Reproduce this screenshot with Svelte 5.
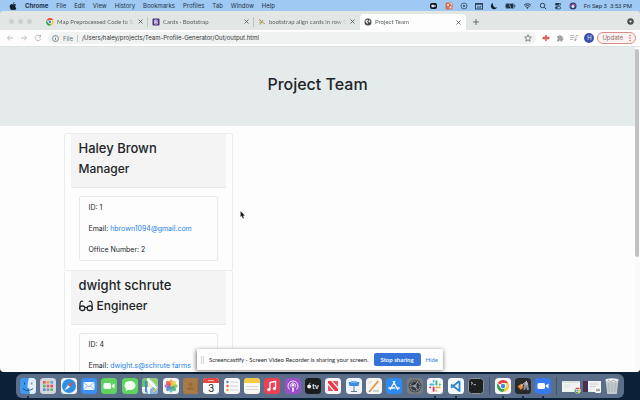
<script>
  const menus = ['File', 'Edit', 'View', 'History', 'Bookmarks', 'Profiles', 'Tab', 'Window', 'Help'];

  const chrome =
    '<circle cx="8" cy="8" r="6" fill="#fff"/><path d="M8 2a6 6 0 0 1 5.2 3H8a3 3 0 0 0-2.7 1.6L2.8 5A6 6 0 0 1 8 2z" fill="#e0443a"/><path d="M13.3 5.1A6 6 0 0 1 8 14l2.7-4.7A3 3 0 0 0 10 5.1z" fill="#f9c932"/><path d="M2.7 5.1A6 6 0 0 0 8 14l2.4-4.2A3 3 0 0 1 5.2 9.300z" fill="#35a155"/><circle cx="8" cy="8" r="2.800" fill="#fff"/><circle cx="8" cy="8" r="2.200" fill="#4285dc"/>';

  const tabs = [
    { title: 'Map Preprocessed Code to Sc', icon: `<g transform="translate(-2.500 -2.500) scale(1.300)">${chrome}</g>` },
    {
      title: 'Cards · Bootstrap',
      icon: '<rect x="1" y="1" width="14" height="14" rx="2" fill="#4b2f83"/><path d="M5.500 4h3.300a2 2 0 0 1 0 4H5.500zM5.500 8h3.700a2 2 0 0 1 0 4H5.500z" fill="none" stroke="#fff" stroke-width="1.600"/>'
    },
    {
      title: 'bootstrap align cards in row C',
      icon: '<path d="M2 3l5 4" stroke="#e05a4a" stroke-width="2"/><path d="M4 13l6-9" stroke="#5fae55" stroke-width="2"/><path d="M8 8l6 4" stroke="#c98b8b" stroke-width="2"/><path d="M2 9h4" stroke="#dfae48" stroke-width="2"/>'
    },
    {
      title: 'Project Team',
      active: true,
      icon: '<circle cx="8" cy="8" r="7" fill="#45494c"/><path d="M3 5l4-2 1 2-2 2 2 2-1 3-2-2-2-3zM10 3l3 3-1 3-3-1z" fill="#e9eded"/>'
    }
  ];

  const status = [
    { name: 'Zoom', w: 9, art: '<rect x="1" y="2" width="14" height="12" rx="4" fill="#10161e"/><rect x="4" y="5.500" width="6" height="5" rx="1" fill="#d8e8f8"/><path d="M10.500 7.500l2-1.500v4l-2-1.500z" fill="#d8e8f8"/>' },
    { name: 'Capture', w: 8, art: '<rect x="1" y="1" width="14" height="14" rx="2" fill="#d96a4d"/><path d="M4 4h4v4H4zM9 9h4v4H9z" fill="#f7e7df"/><path d="M9 3h4v4" stroke="#f7e7df" fill="none" stroke-width="1.500"/>' },
    { name: 'Play', w: 8, art: '<circle cx="8" cy="8" r="6" fill="none" stroke="#2c4560" stroke-width="1.500"/><path d="M6.500 5l4.500 3-4.500 3z" fill="#2c4560"/>' },
    { name: 'Keyboard', w: 8, art: '<rect x="1" y="3" width="14" height="11" fill="none" stroke="#2c4560" stroke-width="2"/><path d="M1 5h14M4 8.500h3M9 8.500h4M4 11.500h8" stroke="#2c4560" stroke-width="1.500"/>' },
    { name: 'Do not disturb', w: 8, art: '<path d="M6 2a6.500 6.500 0 1 0 8 9A7 7 0 0 1 6 2z" fill="#10202f"/>' },
    { name: 'Battery', w: 11, art: '<rect x="-1" y="4" width="15" height="8" rx="2" fill="#1b2d40"/><rect x="-2" y="3" width="18" height="10" rx="3" fill="none" stroke="#2c4560"/><path d="M17 6v4" stroke="#2c4560" stroke-width="1.500"/><path d="M8 2L4.500 8.500h4L7 14" stroke="#9fc9f2" fill="none"/>' },
    { name: 'Wi-Fi', w: 9, art: '<path d="M1 6.500a10 10 0 0 1 14 0M3.500 9a6.500 6.500 0 0 1 9 0" fill="none" stroke="#22384f" stroke-width="2"/><path d="M5.500 11l2.500 3 2.500-3a4 4 0 0 0-5 0z" fill="#22384f"/>' },
    { name: 'Search', w: 8, art: '<circle cx="7" cy="7" r="4.500" fill="none" stroke="#22384f" stroke-width="1.800"/><path d="M10.500 10.500l4 4" stroke="#22384f" stroke-width="2"/>' },
    { name: 'Control Centre', w: 8, art: '<rect x="2" y="2" width="12" height="5" rx="2.500" fill="#22384f"/><circle cx="11.500" cy="4.500" r="1.500" fill="#9fc9f2"/><rect x="2.700" y="9.200" width="10.600" height="4.600" rx="2.200" fill="none" stroke="#22384f" stroke-width="1.500"/><circle cx="5" cy="11.500" r="2" fill="#22384f"/>' },
    { name: 'Siri', w: 8, art: '<circle cx="8" cy="8" r="7" fill="#34386e"/><path d="M3 9c2-6 8-6 10-1" fill="none" stroke="#d86aa5" stroke-width="2"/><circle cx="8" cy="9" r="3" fill="#d9eef8"/>' }
  ];

  const tile = (fill, inner) => `<rect width="16" height="16" rx="3.500" fill="${fill}"/>${inner}`;

  const apps = [
    { name: 'Finder', open: true, art: tile('#3d98ee', '<path d="M9 0h3.500A3.500 3.500 0 0 1 16 3.500v9a3.500 3.500 0 0 1-3.500 3.500H10c-.6-2-.8-4-.8-6H7.500C7.600 6 8 3 9 0z" fill="#e3edf6"/><path d="M4.500 4.500v2M11.800 4.500v2M3 10.500c3 2.500 7 2.500 10 0" fill="none" stroke="#173a66" stroke-width=".8"/>') },
    { name: 'Launchpad', art: tile('#d3d8df', '<path d="M3 3h2.600v2.600H3z" fill="#e5584d"/><path d="M6.700 3h2.600v2.600H6.700z" fill="#f09a42"/><path d="M10.400 3H13v2.600h-2.600z" fill="#54a8e6"/><path d="M3 6.700h2.600v2.600H3z" fill="#54b864"/><path d="M6.700 6.700h2.600v2.600H6.700z" fill="#dd567c"/><path d="M10.400 6.700H13v2.600h-2.600z" fill="#e64d43"/><path d="M3 10.400h2.600V13H3z" fill="#5a8ce0"/><path d="M6.700 10.400h2.600V13H6.700z" fill="#8a929c"/><path d="M10.400 10.400H13V13h-2.600z" fill="#59bd6a"/>') },
    { name: 'Safari', art: tile('#eef2f6', '<circle cx="8" cy="8" r="7" fill="#2f8fe3"/><path d="M12.500 3.500L9 9 7 7z" fill="#e9493f"/><path d="M3.500 12.500L7 7l2 2z" fill="#fff"/>') },
    { name: 'Mail', art: tile('#3a8ff0', '<rect x="2.500" y="4" width="11" height="8" rx="1" fill="#f4f8fd"/><path d="M2.800 4.500L8 9l5.200-4.500M3 11.500l3.500-3.700M13 11.500L9.500 7.800" fill="none" stroke="#76a9e4" stroke-width=".8"/>') },
    { name: 'FaceTime', art: tile('#5fd360', '<rect x="2.500" y="5" width="7.500" height="6" rx="1.500" fill="#f6fff6"/><path d="M10.700 7.500L13.500 5.500v5l-2.800-2z" fill="#f6fff6"/>') },
    { name: 'Messages', art: tile('#60d45f', '<ellipse cx="8" cy="7.500" rx="5.500" ry="4.500" fill="#f6fff6"/><path d="M4.500 10l-1 3 3.500-1.500z" fill="#f6fff6"/>') },
    { name: 'Maps', art: tile('#eee9d6', '<path d="M0 3.500A3.500 3.500 0 0 1 3.500 0H6v9H0z" fill="#6cc06c"/><path d="M7 0h5.500A3.500 3.500 0 0 1 16 3.500V9z" fill="#8ccf78"/><path d="M2 16L14 7l2 3v2.500a3.500 3.500 0 0 1-3.500 3.500z" fill="#7fb5e8"/><path d="M5 1l10 10M0 10h7v6" stroke="#fff" stroke-width="1.800" fill="none"/><path d="M4 14V3" stroke="#3f83e4" stroke-width="1.800"/><path d="M11 14l4-4" stroke="#f3c84c" stroke-width="1.500"/>') },
    { name: 'Photos', art: tile('#f6f6f6', '<g fill-opacity=".85"><ellipse cx="8" cy="4.500" rx="1.900" ry="3" fill="#f39a32"/><ellipse cx="8" cy="11.500" rx="1.900" ry="3" fill="#4fb5c6"/><ellipse cx="4.500" cy="8" rx="3" ry="1.900" fill="#b163b8"/><ellipse cx="11.500" cy="8" rx="3" ry="1.900" fill="#89be45"/><ellipse cx="5.500" cy="5.500" rx="3" ry="1.900" transform="rotate(45 5.500 5.500)" fill="#e75146"/><ellipse cx="10.500" cy="5.500" rx="3" ry="1.900" transform="rotate(-45 10.500 5.500)" fill="#e9cd3b"/><ellipse cx="5.500" cy="10.500" rx="3" ry="1.900" transform="rotate(-45 5.500 10.500)" fill="#6478cf"/><ellipse cx="10.500" cy="10.500" rx="3" ry="1.900" transform="rotate(45 10.500 10.500)" fill="#45ad6c"/></g>') },
    { name: 'Contacts', art: '<rect width="16" height="16" rx="3" fill="#a87a48"/><rect x="14.500" y="2" width="1.500" height="12" fill="#8b6239"/><circle cx="7.500" cy="6.500" r="2" fill="#96693b"/><path d="M4 12c0-4 7-4 7 0z" fill="#96693b"/>' },
    { name: 'Calendar', art: tile('#f8f8f8', '<path d="M0 5V3.500A3.500 3.500 0 0 1 3.500 0h9A3.500 3.500 0 0 1 16 3.500V5z" fill="#e4483f"/><path d="M5 2.500h6" stroke="#f5b5b0"/><text x="8" y="13.500" text-anchor="middle" font-family="Inter, sans-serif" font-size="10" fill="#2b2b2b">3</text>') },
    { name: 'Reminders', art: tile('#f8f8f8', '<circle cx="3.500" cy="4" r="1.200" fill="#3c86e8"/><circle cx="3.500" cy="8" r="1.200" fill="#e8524a"/><circle cx="3.500" cy="12" r="1.200" fill="#f09a37"/><path d="M6 4h8M6 8h8M6 12h8" stroke="#c9cbce" stroke-width=".8"/>') },
    { name: 'Notes', art: tile('#f7f6f2', '<path d="M0 5V3.500A3.500 3.500 0 0 1 3.500 0h9A3.500 3.500 0 0 1 16 3.500V5z" fill="#f3c945"/><path d="M2 8.500h12M2 11.500h12" stroke="#d3d1cb" stroke-width=".8"/>') },
    { name: 'Music', art: tile('#ea4157', '<path d="M6 11.500V4.500l5.500-1.200v7" fill="none" stroke="#fff" stroke-width="1.300"/><circle cx="4.900" cy="11.600" r="1.600" fill="#fff"/><circle cx="10.400" cy="10.500" r="1.600" fill="#fff"/>') },
    { name: 'Podcasts', art: tile('#9a4fc8', '<path d="M4.500 11.500a5 5 0 1 1 7 0M6 9.200a2.600 2.600 0 1 1 4 0" fill="none" stroke="#f2e6fa"/><circle cx="8" cy="7.300" r="1.300" fill="#fff"/><path d="M7 9.500h2l-.5 4.500h-1z" fill="#fff"/>') },
    { name: 'Apple TV', art: tile('#1b1d1f', '<circle cx="4.200" cy="8.500" r="2" fill="#f1f1f1"/><path d="M4.200 6.300l1-1.400" stroke="#f1f1f1" stroke-width=".8"/><text x="10.500" y="10.600" text-anchor="middle" font-family="Inter, sans-serif" font-weight="600" font-size="7" fill="#f1f1f1">tv</text>') },
    { name: 'News', art: tile('#f8f5f5', '<path d="M3 3h3l7 8v2h-3L3 5z" fill="#e6394c"/><path d="M3 7l5.500 6H3zM13 9L7.500 3H13z" fill="#e95766"/>') },
    { name: 'Keynote', art: tile('#eef4fa', '<path d="M2.500 4h11l-1 4h-9z" fill="#3b8de2"/><path d="M5 3h6v2H5z" fill="#74b2ed"/><path d="M8 8v5.500M5 13.500h6" stroke="#64788e"/>') },
    { name: 'Pages', art: tile('#f7f5f1', '<path d="M3.500 12.500L11.500 2.500l1.500 1L5 13z" fill="#ef9432"/><path d="M3.500 12.500L5 13l-2.500 1z" fill="#333"/><path d="M7 13h6" stroke="#9a9a9a" stroke-width=".8"/><path d="M2.500 5.500L6 3" stroke="#d0d0d0"/>') },
    { name: 'App Store', art: tile('#2d8aee', '<path d="M8.700 3.500L4.300 11.500M7.300 3.500l4.400 8M2.800 10h6M10.700 10h2.500" stroke="#fff" stroke-width="1.300" stroke-linecap="round"/>') },
    { name: 'System Preferences', art: tile('#777c81', '<circle cx="8" cy="8" r="6.300" fill="#34383c"/><circle cx="8" cy="8" r="5" fill="none" stroke="#93999e" stroke-width="1.300" stroke-dasharray="1.200 .6"/><path d="M8 8L3.500 8M8 8l2.500-4M8 8l2.500 4" stroke="#a1a6ab"/><circle cx="8" cy="8" r="1.600" fill="#9da2a7"/>') },
    { name: 'Slack', open: true, art: tile('#faf8fa', '<g stroke-width="1.900" stroke-linecap="round"><path d="M6.600 3v.4M3.300 6.500h3.300" stroke="#42bce6"/><path d="M9.400 3.300v3.200M12.700 6.500h.2" stroke="#3cb37f"/><path d="M6.600 9.400v3.300M3.100 9.400h.2" stroke="#dd3164"/><path d="M9.400 9.400h3.300M9.400 12.700v.2" stroke="#e8b33c"/></g>') },
    { name: 'Visual Studio Code', open: true, art: tile('#f4f8fb', '<path d="M11.500 3v10L3 6.500M11.500 3L3 9.700" fill="none" stroke="#2d83cb" stroke-width="1.800" stroke-linejoin="round"/>') },
    { name: 'Terminal', art: '<rect x=".5" y=".5" width="15" height="15" rx="3" fill="#1d2021" stroke="#8c9498"/><path d="M3 4l1.700 1.200L3 6.400M5.500 6.700h2.500" fill="none" stroke="#dfe5e5" stroke-width=".8"/>' }
  ];

  const recent = [
    { name: 'Google Chrome', open: true, art: tile('#f7f7f6', chrome) },
    { name: 'GarageBand', open: true, art: tile('#292a2d', '<path d="M2.500 8.500l4-3 2 3.500-2.500 3z" fill="#e58a37"/><path d="M6 8l6-5" stroke="#e2dfd9"/><path d="M9 6h4l1 6h-2l-1-3-1 3H8.500z" fill="#8f9299"/><circle cx="11.500" cy="5.500" r="1.500" fill="#bdbfc3"/>') },
    { name: 'Zoom', open: true, art: tile('#3779ee', '<rect x="2.500" y="5" width="7.500" height="6" rx="1.500" fill="#fff"/><path d="M10.700 7.500l2.800-2v5l-2.800-2z" fill="#fff"/>') }
  ];

  const shelf = [
    { name: 'Minimised Chrome window', w: 19, box: '0 0 19 16', art: '<rect x="0" y="3" width="18" height="11" fill="#f1f3f2"/><path d="M0 4h18" stroke="#c9d1d0"/><path d="M2 7h8M2 9h6" stroke="#dadfdd" stroke-width=".8"/><g transform="translate(11.500 8.500) scale(.5)">' + chrome + '</g>' },
    { name: 'Minimised Slack window', w: 19, box: '0 0 19 16', art: '<rect x="0" y="3" width="18" height="11" fill="#f1f1f2"/><path d="M0 3h5v11H0z" fill="#4a2f4e"/><path d="M7 6h8M7 8.500h6" stroke="#c7c7cb" stroke-width=".8"/><rect x="12" y="9" width="6" height="6" rx="1.500" fill="#fff"/><path d="M14 10.500v3M16 10.500v3" stroke="#4ab2a1"/><path d="M13 12h4" stroke="#de5b72"/>' },
    { name: 'Bin', w: 16, box: '0 0 16 16', art: '<path d="M1.500 1.500h13L12.800 16H3.200z" fill="#c2c9cd"/><ellipse cx="8" cy="2" rx="6.500" ry="1.700" fill="#eef0f1"/><path d="M4.500 5l.8 9M8 5v9M11.500 5l-.8 9" stroke="#9da6ab" stroke-width=".7"/><path d="M4 2l3 2 2-2 3 1.500" stroke="#a9b0b5" fill="none"/>' }
  ];

  const team = [
    { name: 'Haley Brown', role: 'Manager', id: 1, email: 'hbrown1094@gmail.com', office: 2 },
    { name: 'dwight schrute', role: 'Engineer', id: 4, email: 'dwight.s@schrute farms' }
  ];

  let url = $state('/Users/haley/projects/Team-Profile-Generator/Out/output.html');
</script>

{#snippet app(item)}
  <button class="app" class:open={item.open} aria-label={item.name}>
    <svg width={item.w ?? 16} height="16" viewBox={item.box ?? '0 0 16 16'}>{@html item.art}</svg>
  </button>
{/snippet}

<div class="desktop">
  <header class="menubar">
    <svg class="apple" width="8" height="8" viewBox="0 0 16 16" aria-hidden="true">
      <path d="M11 0c.1 2-1.300 3.600-3 3.700C7.800 2 9.300.3 11 0zM8.200 4.800c.8 0 1.500-.8 3-.8 1.300 0 2.400.7 3 1.700-2.700 1.600-2.200 5 .5 6.100-.7 1.900-2 4.200-3.500 4.200-1.200 0-1.500-.7-2.900-.7s-1.800.7-2.900.7C3.400 16 1.400 12 1.400 9c0-3 1.900-4.900 3.900-4.900 1.300 0 2.200.7 2.900.7z" />
    </svg>
    <nav>
      <button class="current">Chrome</button>
      {#each menus as menu}<button>{menu}</button>{/each}
    </nav>
    <div class="status">
      {#each status as s}
        <button aria-label={s.name}><svg width={s.w} height="8" viewBox="0 0 16 16">{@html s.art}</svg></button>
      {/each}
      <time>Fri Sep 3&nbsp; 3:53 PM</time>
    </div>
  </header>

  <div class="window">
    <div class="tabstrip">
      <div class="lights"><i></i><i></i><i></i></div>
      {#each tabs as tab}
        <div class="tab" class:active={tab.active}>
          <svg width="8" height="8" viewBox="0 0 16 16">{@html tab.icon}</svg>
          <span>{tab.title}</span>
          <button aria-label="Close tab"><svg width="5" height="5" viewBox="0 0 10 10"><path d="M1 1l8 8M9 1L1 9" stroke="#4b5052" stroke-width="1.600" /></svg></button>
        </div>
      {/each}
      <button class="plus" aria-label="New tab"><svg width="6" height="6" viewBox="0 0 12 12"><path d="M6 0v12M0 6h12" stroke="#4b5052" stroke-width="1.600" /></svg></button>
      <button class="search" aria-label="Search tabs"><svg width="7" height="7" viewBox="0 0 14 14"><circle cx="7" cy="7" r="6.500" fill="#4b5052" /><path d="M4 5.500h6L7 9.500z" fill="#fff" /></svg></button>
    </div>

    <div class="toolbar">
      <div class="actions">
        <button aria-label="Back"><svg width="8" height="8" viewBox="0 0 16 16"><path d="M14 8H3M8 3L3 8l5 5" class="dim" /></svg></button>
        <button aria-label="Forward"><svg width="8" height="8" viewBox="0 0 16 16"><path d="M2 8h11M8 3l5 5-5 5" class="dim" /></svg></button>
        <button aria-label="Reload"><svg width="8" height="8" viewBox="0 0 16 16"><path d="M12.500 4.500a5.500 5.500 0 1 0 1 4.500M13 1.500V6H9" class="dim" /></svg></button>
      </div>
      <div class="omnibox">
        <svg width="7" height="7" viewBox="0 0 14 14"><circle cx="7" cy="7" r="6" fill="none" stroke="#5b6062" stroke-width="1.400" /><path d="M7 6v4.500M7 3.500V5" stroke="#5b6062" stroke-width="1.500" /></svg>
        <label for="url">File</label>
        <input id="url" type="text" bind:value={url} spellcheck="false" />
        <button aria-label="Bookmark"><svg width="8" height="8" viewBox="0 0 16 16"><path d="M8 1.500l2 4.400 4.700.5-3.500 3.200 1 4.700L8 11.900l-4.200 2.400 1-4.700L1.300 6.400 6 5.900z" fill="none" stroke="#54595b" stroke-width="1.400" /></svg></button>
      </div>
      <div class="actions">
        <button aria-label="Screencastify"><svg width="8" height="8" viewBox="0 0 16 16"><path d="M0 8l5-4v8zM16 8l-5-4v8z" fill="#e2504c" /><path d="M8 2v12M4 8h8" stroke="#e2504c" stroke-width="3" /></svg></button>
        <button aria-label="Extensions"><svg width="8" height="8" viewBox="0 0 16 16"><path d="M2 4h4a2 2 0 1 1 4 0h3v4a2 2 0 1 1 0 4v3H9.500a2 2 0 0 0-4 0H2v-4a2 2 0 0 0 0-4z" fill="#a0a4a6" /></svg></button>
        <button aria-label="Media"><svg width="8" height="8" viewBox="0 0 16 16"><path d="M0 3h9M0 7h9M0 11h6M12 12V3h4" fill="none" stroke="#a0a4a6" stroke-width="1.500" /><circle cx="10.500" cy="12" r="2" fill="#a0a4a6" /></svg></button>
        <button class="avatar">H</button>
      </div>
      <button class="update">Update <svg width="2" height="8" viewBox="0 0 4 16"><g fill="#d6544c"><circle cx="2" cy="3" r="1.500" /><circle cx="2" cy="8" r="1.500" /><circle cx="2" cy="13" r="1.500" /></g></svg></button>
    </div>

    <div class="viewport">
      <main>
        <div class="jumbotron"><h1>Project Team</h1></div>
        <div class="container">
          {#each team as member}
            <article>
              <header>
                <h2>{member.name}</h2>
                <h3>
                  {#if member.role === 'Engineer'}
                    <svg width="14" height="12" viewBox="0 0 28 24" aria-hidden="true"><path d="M7.500 2.500C3.500 1.500 2.500 3.500 2 8L1.500 17M20.500 2.500c4-1 5 1 5.500 5.500l.5 9M11 15.500c2-1 4-1 6 0" fill="none" stroke="#212529" stroke-width="2.400" stroke-linecap="round" /><rect x="1.500" y="12" width="10" height="9" rx="4" fill="none" stroke="#212529" stroke-width="2.600" /><rect x="16.500" y="12" width="10" height="9" rx="4" fill="none" stroke="#212529" stroke-width="2.600" /></svg>
                  {/if}
                  {member.role}
                </h3>
              </header>
              <ul>
                <li>ID: {member.id}</li>
                <li>Email: <a href={'mailto:' + member.email}>{member.email}</a></li>
                {#if member.office}<li>Office Number: {member.office}</li>{/if}
              </ul>
            </article>
          {/each}
        </div>
      </main>
      <div class="scrollbar"><i></i></div>
    </div>
  </div>

  <footer>
    <div class="dock">
      <div class="group wide">{#each apps as item}{@render app(item)}{/each}</div>
      <hr />
      <div class="group">{#each recent as item}{@render app(item)}{/each}</div>
      <hr />
      <div class="group tight">{#each shelf as item}{@render app(item)}{/each}</div>
    </div>
  </footer>

  <div class="toast" role="status">
    <svg width="3" height="8" viewBox="0 0 3 8"><path d="M.5 0v8M2.500 0v8" stroke="#c4c7c9" stroke-width=".8" /></svg>
    <span>Screencastify - Screen Video Recorder is sharing your screen.</span>
    <button class="stop">Stop sharing</button>
    <button class="hide">Hide</button>
  </div>

  <svg class="cursor" width="5" height="8" viewBox="0 0 10 16" aria-hidden="true"><path d="M1 0v12l2.500-2L5.500 15l2.500-1-2-4.500H10z" fill="#111" stroke="#ddd" stroke-width=".5" /></svg>
</div>

<style>
  .desktop {
    position: relative;
    display: flex;
    flex-direction: column;
    height: 100vh;
    overflow: hidden;
    background: linear-gradient(#9fc9f2 20px, #12283f 40px, #0c2036);
    color: #212529;
    font-family: Inter, 'Liberation Sans', sans-serif;
    font-size: 7px;
    line-height: 10px;
  }
  button {
    display: flex;
    align-items: center;
    justify-content: center;
    padding: 0;
    border: 0;
    background: none;
    color: inherit;
    font: inherit;
    white-space: nowrap;
  }
  svg {
    display: block;
    flex: none;
    overflow: visible;
  }
  .menubar {
    flex: none;
    display: flex;
    align-items: center;
    height: 11px;
    padding: 0 8px 0 9px;
    background: #9fc9f2;
    color: #1d3146;
    font-size: 6px;
  }
  .apple {
    margin-right: 8px;
    fill: #10202f;
  }
  nav {
    display: flex;
    gap: 8px;
  }
  .current {
    font-weight: 700;
  }
  .status {
    display: flex;
    align-items: center;
    gap: 7px;
    margin-left: auto;
  }
  time {
    font-family: Roboto, sans-serif;
    white-space: nowrap;
  }
  .window {
    flex: 1;
    min-height: 0;
    display: flex;
    flex-direction: column;
    overflow: hidden;
    border-radius: 4px;
    background: #fdfdfd;
  }
  .tabstrip {
    flex: none;
    display: flex;
    align-items: center;
    box-sizing: border-box;
    height: 19px;
    padding: 2px 6px 0 0;
    background: #e2e7e6;
    color: #5c6264;
    font-family: Lato, sans-serif;
    font-size: 6px;
  }
  .lights {
    display: flex;
    gap: 4px;
    width: 33px;
    padding-left: 9px;
  }
  .lights i {
    width: 5px;
    height: 5px;
    border-radius: 50%;
    background: #cdd1d0;
  }
  .tab {
    flex: 0 1 106px;
    display: flex;
    align-items: center;
    gap: 3px;
    box-sizing: border-box;
    min-width: 0;
    height: 10px;
    padding: 0 4px;
    border-right: 1px solid #bfc5c4;
  }
  .tab span {
    flex: 1;
    overflow: hidden;
    white-space: nowrap;
    mask-image: linear-gradient(90deg, #000 85%, transparent);
  }
  .tab:nth-child(4),
  .tab.active {
    border-color: transparent;
  }
  .tab.active {
    height: 16px;
    align-self: flex-end;
    border-radius: 4px 4px 0 0;
    background: #fdfdfd;
  }
  .plus {
    margin-left: 7px;
  }
  .search {
    margin-left: auto;
  }
  .toolbar {
    flex: none;
    display: flex;
    align-items: center;
    gap: 3px;
    height: 16px;
    padding: 0 4px 0 6px;
    border-bottom: 1px solid #dfe2e1;
    background: #fdfdfd;
  }
  .dim {
    fill: none;
    stroke: #a5a9ab;
    stroke-width: 1.5;
  }
  .actions {
    display: flex;
    align-items: center;
    gap: 6px;
  }
  .omnibox {
    flex: 1;
    display: flex;
    align-items: center;
    gap: 4px;
    height: 12px;
    margin: 0 3px;
    padding: 0 4px;
    border-radius: 6px;
    background: #f0f2f2;
    font-size: 6px;
  }
  label {
    padding-right: 4px;
    border-right: 1px solid #c4c8c9;
    color: #6a7072;
    line-height: 7px;
  }
  input {
    flex: 1;
    min-width: 0;
    padding: 0;
    border: 0;
    outline: 0;
    background: none;
    color: #303436;
    font: inherit;
  }
  .avatar {
    width: 10px;
    height: 10px;
    border-radius: 50%;
    background: #3c4fae;
    color: #dfe4fa;
    font-size: 6px;
  }
  .update {
    box-sizing: border-box;
    gap: 6px;
    height: 12px;
    padding: 0 4px;
    border: 1px solid #d98f89;
    border-radius: 6px;
    background: #fbf1f0;
    color: #8b6f6c;
    font-size: 6px;
  }
  .viewport {
    flex: 1;
    min-height: 0;
    display: flex;
  }
  main {
    flex: 1;
    overflow: hidden;
  }
  .scrollbar {
    width: 5px;
    padding-top: 2px;
    background: #fafafa;
  }
  .scrollbar i {
    display: block;
    width: 4px;
    height: 208px;
    border-radius: 2px;
    background: #c1c3c3;
  }
  h1,
  h2,
  h3,
  ul {
    margin: 0;
    font-weight: 500;
  }
  .jumbotron {
    padding: 25px 0 30px;
    margin-bottom: 7px;
    background: #e5ebea;
    text-align: center;
  }
  h1 {
    font-size: 16px;
    line-height: 24px;
  }
  .container {
    display: flex;
    flex-direction: column;
    align-items: flex-start;
    padding-left: 10%;
  }
  article {
    box-sizing: border-box;
    width: 169px;
    padding: 0 6px 9px;
    border: 1px solid #ebecec;
    border-bottom: 0;
    border-radius: 2px;
  }
  article header {
    padding: 4px 8px 8px;
    border-bottom: 1px solid #e8e9e9;
    background: #f4f4f4;
  }
  h2 {
    font-size: 13px;
    line-height: 20px;
  }
  h3 {
    display: flex;
    align-items: center;
    gap: 4px;
    font-size: 12px;
    line-height: 21px;
  }
  ul {
    margin: 8px 8px 0;
    padding: 0 9px;
    border: 1px solid #e8e9e9;
    border-radius: 2px;
    list-style: none;
    font-weight: 400;
  }
  li {
    line-height: 21px;
    white-space: nowrap;
  }
  a {
    color: #2683e8;
    text-decoration: none;
  }
  footer {
    flex: none;
    padding: 2px 16px;
  }
  .dock {
    display: flex;
    align-items: center;
    height: 24px;
    padding: 0 4px;
    border-radius: 6px;
    background: #5a6e89;
  }
  .group {
    display: flex;
    gap: 4px;
  }
  .wide {
    flex: 1;
    gap: 0;
    justify-content: space-between;
  }
  .tight {
    gap: 2px;
  }
  hr {
    width: 1px;
    height: 18px;
    margin: 0 5px;
    border: 0;
    background: #43556e;
  }
  .app {
    position: relative;
  }
  .open::after {
    content: '';
    position: absolute;
    bottom: -4px;
    left: 7px;
    width: 2px;
    height: 2px;
    border-radius: 50%;
    background: #0f1c2b;
  }
  .toast {
    position: absolute;
    bottom: 30px;
    left: 50%;
    display: flex;
    align-items: center;
    gap: 5px;
    height: 21px;
    padding: 0 5px 0 4px;
    transform: translateX(-50%);
    border-radius: 1px;
    background: #fdfdfd;
    box-shadow: 0 1px 4px #0008;
    color: #25292b;
    font-family: Lato, sans-serif;
    font-size: 6px;
    white-space: nowrap;
  }
  .stop {
    width: 47px;
    height: 13px;
    border-radius: 2px;
    background: #3573d9;
    color: #f4f8ff;
    font-weight: 700;
  }
  .hide {
    color: #3b7de0;
  }
  .cursor {
    position: absolute;
    top: 211px;
    left: 240px;
  }
</style>
